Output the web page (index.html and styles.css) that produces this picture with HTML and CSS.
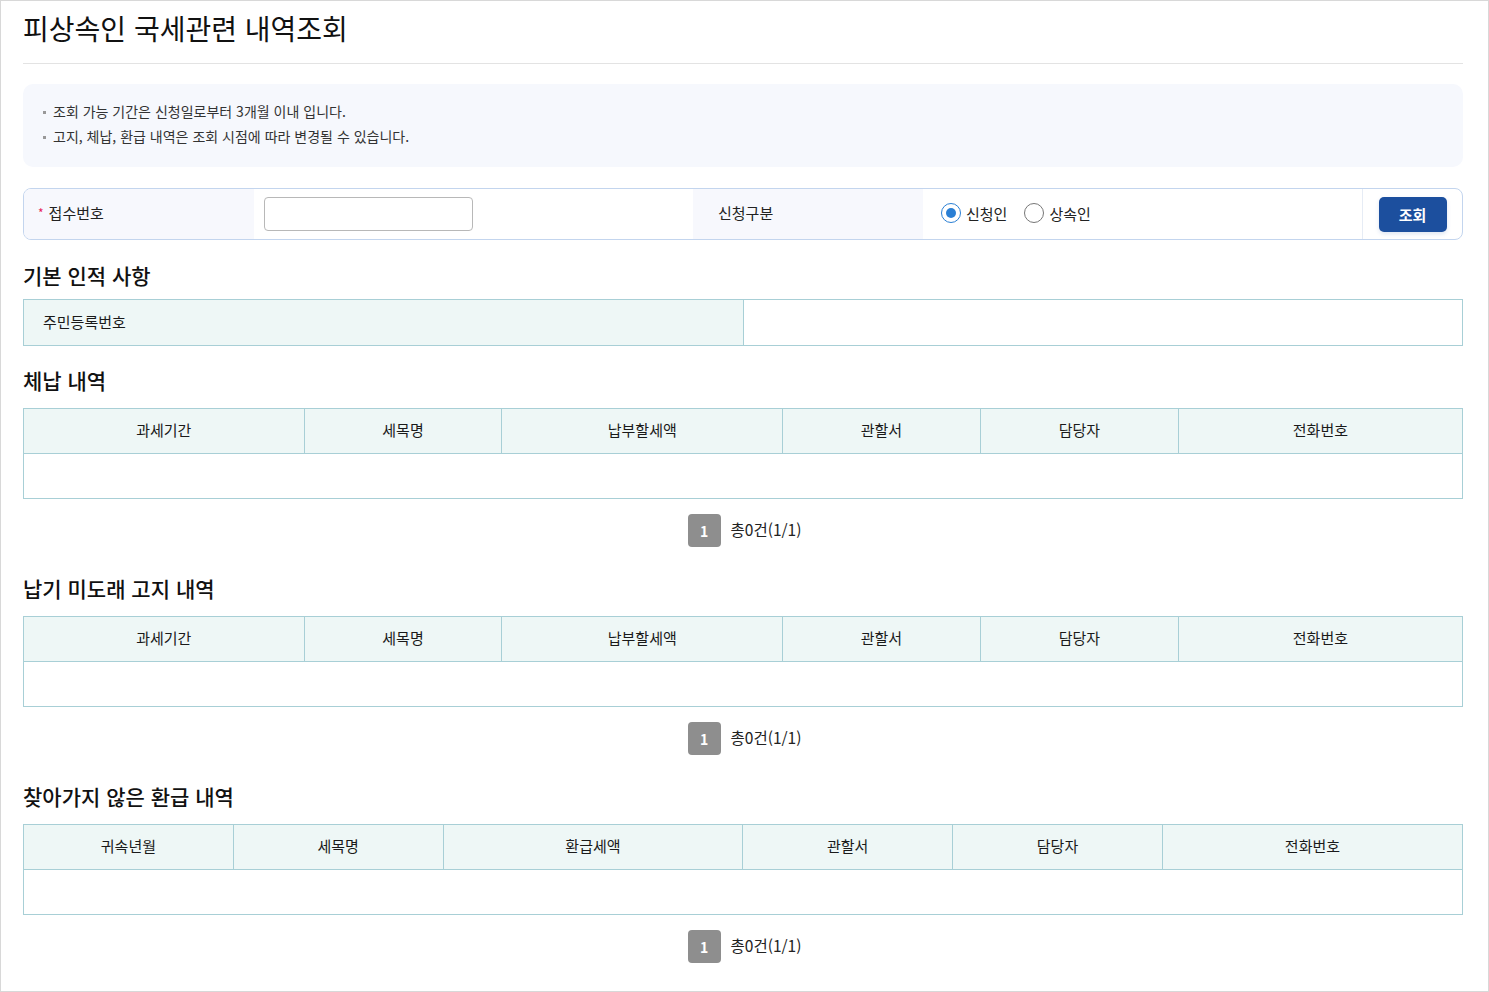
FILE: index.html
```html
<html lang="ko">
<head>
    <meta charset="UTF-8">
    <title>피상속인 국세관련 내역조회</title>
    <link rel="stylesheet" href="styles.css">
</head>
<body>
    <div class="page">
        <h1 class="title">피상속인 국세관련 내역조회</h1>

        <div class="notice">
            <ul>
                <li>조회 가능 기간은 신청일로부터 3개월 이내 입니다.</li>
                <li>고지, 체납, 환급 내역은 조회 시점에 따라 변경될 수 있습니다.</li>
            </ul>
        </div>

        <div class="search">
            <div class="search-label"><span class="req">*</span> 접수번호</div>
            <div class="search-field"><input type="text" class="text-input"></div>
            <div class="search-label">신청구분</div>
            <div class="search-field radios">
                <label class="radio"><span class="dot on"></span>신청인</label>
                <label class="radio"><span class="dot"></span>상속인</label>
            </div>
            <div class="search-btn"><button>조회</button></div>
        </div>

        <h2 class="sec-title first">기본 인적 사항</h2>
        <table class="grid info">
            <colgroup><col class="w-half"><col></colgroup>
            <tr>
                <th class="left">주민등록번호</th>
                <td></td>
            </tr>
        </table>

        <h2 class="sec-title after-table">체납 내역</h2>
        <table class="grid list">
            <colgroup>
                <col class="w-a"><col class="w-b"><col class="w-a"><col class="w-b"><col class="w-b"><col>
            </colgroup>
            <tr>
                <th>과세기간</th><th>세목명</th><th>납부할세액</th><th>관할서</th><th>담당자</th><th>전화번호</th>
            </tr>
            <tr class="empty"><td colspan="6"></td></tr>
        </table>
        <div class="paging"><span class="num">1</span><span class="total">총0건(1/1)</span></div>

        <h2 class="sec-title">납기 미도래 고지 내역</h2>
        <table class="grid list">
            <colgroup>
                <col class="w-a"><col class="w-b"><col class="w-a"><col class="w-b"><col class="w-b"><col>
            </colgroup>
            <tr>
                <th>과세기간</th><th>세목명</th><th>납부할세액</th><th>관할서</th><th>담당자</th><th>전화번호</th>
            </tr>
            <tr class="empty"><td colspan="6"></td></tr>
        </table>
        <div class="paging"><span class="num">1</span><span class="total">총0건(1/1)</span></div>

        <h2 class="sec-title">찾아가지 않은 환급 내역</h2>
        <table class="grid list">
            <colgroup>
                <col class="w-c"><col class="w-c"><col class="w-d"><col class="w-c"><col class="w-c"><col>
            </colgroup>
            <tr>
                <th>귀속년월</th><th>세목명</th><th>환급세액</th><th>관할서</th><th>담당자</th><th>전화번호</th>
            </tr>
            <tr class="empty"><td colspan="6"></td></tr>
        </table>
        <div class="paging"><span class="num">1</span><span class="total">총0건(1/1)</span></div>
    </div>
</body>
</html>
```

FILE: styles.css
```css
html, body {
    margin: 0;
    padding: 0;
}

body {
    font-family: 'Noto Sans CJK KR', 'Noto Sans', sans-serif;
    color: #222;
    background: #fff;
}

.page {
    box-sizing: border-box;
    width: 1489px;
    height: 992px;
    border: 1px solid #d8d8d8;
    padding: 0 25px 0 22px;
    overflow: hidden;
}

.title {
    margin: 0;
    padding: 7px 0 15px;
    font-size: 28px;
    font-weight: 400;
    line-height: 40px;
    color: #111;
    border-bottom: 1px solid #e3e3e3;
}

.notice {
    margin-top: 20px;
    background: #f6f8fd;
    border-radius: 10px;
    padding: 15px 20px 18px;
}

.notice ul {
    margin: 0;
    padding: 0;
    list-style: none;
}

.notice li {
    position: relative;
    padding-left: 10px;
    font-size: 14px;
    line-height: 25px;
    color: #333;
}

.notice li::before {
    content: '';
    position: absolute;
    left: 0;
    top: 12px;
    width: 3px;
    height: 3px;
    background: #999;
}

.search {
    margin-top: 21px;
    display: flex;
    height: 52px;
    box-sizing: border-box;
    border: 1px solid #c3d5ee;
    border-radius: 8px;
    overflow: hidden;
}

.search-label {
    width: 230px;
    box-sizing: border-box;
    padding: 0 0 3px 14px;
    background: #f7f8fd;
    display: flex;
    align-items: center;
    font-size: 15px;
    color: #222;
}

.search-label + .search-field + .search-label {
    padding-left: 25px;
}

.req {
    color: #e8245a;
    font-size: 12px;
    margin-right: 5px;
}

.search-field {
    flex: 1;
    display: flex;
    align-items: center;
    padding-left: 10px;
}

.text-input {
    width: 209px;
    height: 34px;
    box-sizing: border-box;
    border: 1px solid #b8b8b8;
    border-radius: 4px;
}

.radios {
    padding-bottom: 2px;
    gap: 17px;
}

.radio {
    display: flex;
    align-items: center;
    font-size: 15px;
    color: #222;
}

.radio:first-child {
    margin-left: 8px;
}

.dot {
    width: 20px;
    height: 20px;
    box-sizing: border-box;
    border: 1px solid #777;
    border-radius: 50%;
    margin-right: 5px;
    position: relative;
    background: #fff;
}

.dot.on {
    border-color: #2a7fd4;
}

.dot.on::after {
    content: '';
    position: absolute;
    left: 4px;
    top: 4px;
    width: 10px;
    height: 10px;
    border-radius: 50%;
    background: #2a7fd4;
}

.search-btn {
    width: 99px;
    border-left: 1px solid #e6ecf5;
    display: flex;
    align-items: center;
    justify-content: center;
}

.search-btn button {
    width: 68px;
    height: 35px;
    border: none;
    border-radius: 5px;
    background: #1c4f9e;
    color: #fff;
    font-family: inherit;
    font-size: 15px;
    font-weight: 700;
    box-shadow: 0 2px 4px rgba(28, 79, 158, 0.15);
}

.sec-title {
    margin: 27px 0 14px;
    font-size: 21px;
    font-weight: 500;
    line-height: 28px;
    color: #111;
}

.sec-title.first {
    margin: 21px 0 10px;
}

.sec-title.after-table {
    margin-top: 20px;
}

.grid {
    width: 100%;
    border-collapse: collapse;
    table-layout: fixed;
    border: 1px solid #a8cfd6;
}

.grid th,
.grid td {
    border: 1px solid #a8cfd6;
    font-size: 15px;
    font-weight: 400;
    color: #1a1a1a;
    padding: 0;
}

.grid th {
    background: #eef7f6;
    height: 45px;
    padding-bottom: 3px;
    box-sizing: border-box;
    text-align: center;
}

.grid.info th {
    height: 46px;
}

.grid th.left {
    text-align: left;
    padding-left: 19px;
}

.grid td {
    background: #fff;
}

.empty td {
    height: 45px;
}

.w-half { width: 50%; }
.w-a { width: 19.5%; }
.w-b { width: 13.75%; }
.w-c { width: 14.58%; }
.w-d { width: 20.83%; }

.paging {
    display: flex;
    justify-content: center;
    align-items: center;
    gap: 10px;
    margin: 15px 0 0;
    padding-left: 3px;
}

.num {
    width: 33px;
    height: 33px;
    border-radius: 4px;
    background: #8e8e8e;
    color: #fff;
    font-size: 14px;
    font-weight: 700;
    display: flex;
    align-items: center;
    justify-content: center;
}

.total {
    font-size: 15.5px;
    color: #222;
    margin-top: -3px;
}
```
